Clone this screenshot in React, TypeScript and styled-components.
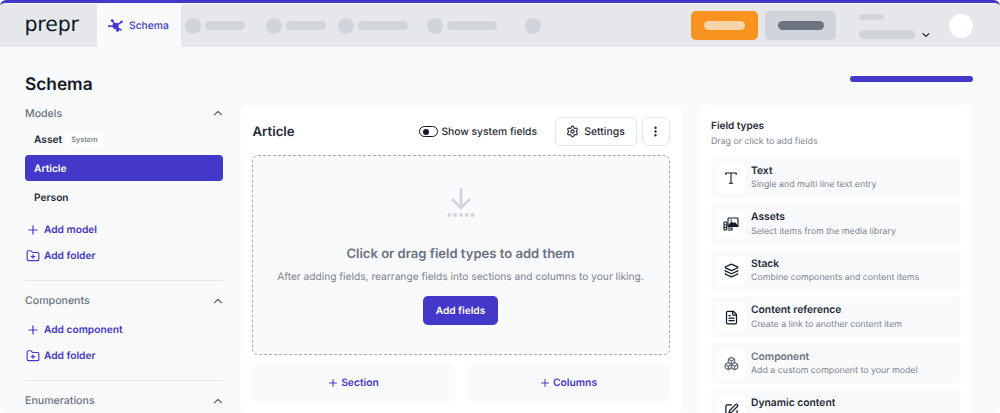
import React from "react";
import styled, { createGlobalStyle } from "styled-components";
import { Boxes, ChevronDown, ChevronUp, FileText, FolderPlus, Layers, MoreVertical, Plus, Settings, SquarePen } from "lucide-react";

const Global = createGlobalStyle`
  html, body { margin: 0; padding: 0; background: #fff; }
  body { font-family: Inter, "Liberation Sans", sans-serif; overflow: hidden; text-rendering: geometricPrecision; -webkit-font-smoothing: antialiased; }
  * { box-sizing: border-box; }
`;
const Page = styled.div`
  width: 1000px; height: 413px; overflow: hidden; background: #f9fafb;
  border-radius: 6px; border-top: 3px solid #4338ca;
`;
const Header = styled.header`
  height: 43px; margin-top: 1px; background: #e5e7eb; display: flex; align-items: stretch; padding-right: 27px;
`;
const Logo = styled.div`
  width: 97px; padding: 0 0 3px 24.5px; display: flex; align-items: center;
  font: 400 20.5px/1 "DejaVu Sans", sans-serif; letter-spacing: -.15px; color: #111827;
`;
const ActiveTab = styled.div`
  width: 84px; background: #f9fafb; color: #4338ca; font-size: 10.3px; font-weight: 500;
  display: flex; align-items: center; gap: 6px; padding-left: 11px;
`;
const Skeletons = styled.div`
  display: flex; align-items: center; flex: 1; padding-left: 4px;
`;
const SkeletonItem = styled.div<{ $gap: number }>`
  display: flex; align-items: center; gap: 4px; margin-right: ${p => p.$gap}px;
`;
const Dot = styled.span`
  width: 16px; height: 16px; border-radius: 50%; background: #d1d5db;
`;
const Bar = styled.span<{ $w: number; $h?: number }>`
  width: ${p => p.$w}px; height: ${p => p.$h ?? 9}px; border-radius: 5px; background: #d1d5db;
`;
const HeaderButton = styled.div<{ $w: number; $bg: string; $ml?: number }>`
  width: ${p => p.$w}px; height: 29px; border-radius: 5px; background: ${p => p.$bg};
  margin-left: ${p => p.$ml ?? 0}px; align-self: center;
  display: flex; align-items: center; justify-content: center;
`;
const ButtonBar = styled.span<{ $w: number; $bg: string }>`
  width: ${p => p.$w}px; height: 9px; border-radius: 5px; background: ${p => p.$bg};
`;
const Account = styled.div`
  width: 73px; margin-left: 23px; display: flex; flex-direction: column; align-self: center; gap: 9px;
`;
const AccountRow = styled.div`
  display: flex; align-items: center; gap: 5px; height: 9px; color: #111827;
`;
const Avatar = styled.span`
  width: 24px; height: 24px; border-radius: 50%; background: #fff; margin-left: 17px; align-self: center;
`;
const Content = styled.main`
  padding: 0 28px 0 25px;
`;
const TitleRow = styled.div`
  height: 58px; display: flex; align-items: center; justify-content: space-between; padding-top: 17px;
`;
const Title = styled.h1`
  margin: 0; font-size: 17.3px; line-height: 24px; font-weight: 600; color: #111827;
`;
const Progress = styled.span`
  width: 123px; height: 6px; border-radius: 3px; background: #4338ca; margin: 0 -1px 12px 0;
`;
const Columns = styled.div`
  display: grid; grid-template-columns: 198px 441px 273px; column-gap: 17.5px; align-items: start;
`;
const Sidebar = styled.aside`
  display: flex; flex-direction: column; margin-top: -1px;
`;
const SectionHead = styled.div`
  height: 18px; display: flex; align-items: center; justify-content: space-between;
  font-size: 10.6px; font-weight: 500; color: #6b7280;
  svg { color: #6b7280; margin-right: -2px; }
`;
const ModelRow = styled.div<{ $active?: boolean }>`
  height: 26px; margin-bottom: 3px; border-radius: 4px; padding: 1px 0 0 9px; display: flex; align-items: center; gap: 3px;
  font-size: 10.2px; font-weight: 600; color: ${p => (p.$active ? "#fff" : "#1f2937")};
  background: ${p => (p.$active ? "#4338ca" : "transparent")};
`;
const Models = styled.div`
  margin-top: 4px; margin-bottom: 4px;
`;
const Badge = styled.span`
  background: #fff; color: #6b7280; font-size: 7.4px; font-weight: 500; border-radius: 8px; padding: 3px 6px;
`;
const AddLink = styled.div`
  height: 26px; display: flex; align-items: center; gap: 4px; padding-left: 1px;
  font-size: 10.2px; font-weight: 600; color: #4338ca;
`;
const Divider = styled.hr`
  width: 100%; height: 1px; background: #e5e7eb; border: 0; margin: 11px 0 10.5px;
`;
const AddList = styled.div`
  margin-top: 7.5px;
`;
const Card = styled.section`
  height: 310px; background: #fff; border-radius: 8px 8px 0 0;
`;
const EditorCard = styled(Card)`
  padding: 12px 12px 0 11px;
  border-radius: 8px;
`;
const EditorHead = styled.div`
  height: 29px; display: flex; align-items: center; margin-bottom: 9px;
`;
const EditorTitle = styled.h2`
  flex: 1; margin: 0 0 0 1px; font-size: 13.2px; font-weight: 600; color: #1f2937;
`;
const Toggle = styled.span`
  width: 19px; height: 11px; border: 1px solid #111827; border-radius: 6px; display: flex; align-items: center; padding-left: 3px; margin-right: 3px;
  &::before { content: ""; width: 6px; height: 6px; border-radius: 50%; background: #111827; }
`;
const ToggleLabel = styled.span`
  font-size: 10.3px; font-weight: 500; color: #1f2937; margin-right: 17.5px;
`;
const OutlineButton = styled.div<{ $w: number; $ml?: number }>`
  width: ${p => p.$w}px; height: 29px; border: 1px solid #e5e7eb; border-radius: 6px; background: #fff;
  margin-left: ${p => p.$ml ?? 0}px;
  display: flex; align-items: center; justify-content: center; gap: 5px;
  font-size: 10.4px; font-weight: 500; color: #1f2937;
`;
const DropZone = styled.div`
  height: 200px; border: 1px dashed #a7abb3; border-radius: 6px; background: #f9fafb;
  display: flex; flex-direction: column; align-items: center; padding-top: 31px;
`;
const DropHeading = styled.h3`
  margin: 27px 0 0; font-size: 13.05px; line-height: 20px; font-weight: 600; color: #6b7280;
`;
const DropText = styled.p`
  margin: 5px 0 0; font-size: 10.2px; line-height: 16px; color: #7d838f;
`;
const PrimaryButton = styled.div`
  width: 75px; height: 29px; margin-top: 11px; border-radius: 5px; background: #4338ca; color: #fff;
  display: flex; align-items: center; justify-content: center; font-size: 10.1px; font-weight: 600;
`;
const AddRow = styled.div`
  display: grid; grid-template-columns: 1fr 1fr; gap: 12px; margin-top: 9px;
`;
const AddCell = styled.div`
  height: 37px; border-radius: 5px; background: #f9fafb; color: #4338ca;
  display: flex; align-items: center; justify-content: center; gap: 2px; font-size: 10.3px; font-weight: 600;
`;
const TypesCard = styled(Card)`
  padding: 13.5px 11px 0 12px;
`;
const TypesTitle = styled.h2`
  margin: 0; font-size: 10px; line-height: 15px; font-weight: 600; color: #1f2937;
`;
const TypesSub = styled.p`
  margin: 1.5px 0 8px; font-size: 8.8px; line-height: 14px; color: #7d838f;
`;
const TypeList = styled.div`
  display: flex; flex-direction: column; gap: 5.6px;
`;
const TypeRow = styled.div`
  height: 41px; flex: none; background: #f9fafb; border-radius: 5px; padding: 5.5px 5px; display: flex; gap: 5px;
`;
const TypeIcon = styled.span<{ $muted?: boolean }>`
  width: 30px; height: 30px; flex: none; border-radius: 4px; background: #fff; display: flex; align-items: center; justify-content: center;
  color: ${p => (p.$muted ? "#6b7280" : "#111827")};
`;
const TypeText = styled.div`
  display: flex; flex-direction: column; margin-top: 1px;
`;
const TypeName = styled.span<{ $muted?: boolean }>`
  font-size: 10.3px; line-height: 14px; font-weight: 600; color: ${p => (p.$muted ? "#6b7280" : "#1f2937")};
`;
const TypeDesc = styled.span`
  font-size: 8.8px; line-height: 14px; margin-top: .5px; color: #7d838f; white-space: nowrap;
`;

const SchemaIcon = () => (
  <svg width="15" height="13" viewBox="0 0 15 13" fill="#4338ca" stroke="#4338ca" strokeWidth="1.5">
    <path d="M.8 7.2 7.5 6.8M4.2 1.6 7.5 6.8 9.5 10.6M7.5 6.8 13.6 3M13.6 11.4 8.5 8" fill="none" />
    <circle cx="7.6" cy="6.9" r="3.1" stroke="none" />
    <circle cx="4.2" cy="1.6" r="1.4" stroke="none" />
    <circle cx="1" cy="7.2" r="1" stroke="none" />
    <circle cx="9.6" cy="11" r="1.8" stroke="none" />
    <circle cx="13.6" cy="2.8" r="1.2" stroke="none" />
  </svg>
);
const SerifT = () => (
  <svg width="16" height="16" viewBox="0 0 16 16" fill="none" stroke="currentColor" strokeWidth="1.1">
    <path d="M2.8 5V3h10.4v2M8 3v10.3M5.8 13.3h4.4" />
  </svg>
);
const AssetsIcon = () => (
  <svg width="16" height="16" viewBox="0 0 16 16" fill="none" stroke="currentColor" strokeWidth="1.1">
    <rect x="5" y="2" width="10" height="8.5" rx=".8" />
    <path d="M5.5 9.8 8.5 6l2 2 1.3-1.3 2.8 3.2z" fill="currentColor" />
    <circle cx="8" cy="4.3" r=".8" fill="currentColor" stroke="none" />
    <rect x="1" y="6" width="2.8" height="8" rx=".6" />
    <path d="M1 9h2.8M1 11.5h2.8M5 12h4v2H5" />
  </svg>
);
const DropIcon = () => (
  <svg width="32" height="30" viewBox="0 0 32 30" fill="none" stroke="#d1d5db" strokeWidth="2.6">
    <path d="M16 1v19M7 12l9 9 9-9" />
    <g fill="#d1d5db" stroke="none">
      <circle cx="4.5" cy="28" r="2" /><circle cx="10.2" cy="28" r="2" /><circle cx="16" cy="28" r="2" />
      <circle cx="21.8" cy="28" r="2" /><circle cx="27.5" cy="28" r="2" />
    </g>
  </svg>
);

const types = [
  { name: "Text", desc: "Single and multi line text entry", icon: <SerifT /> },
  { name: "Assets", desc: "Select items from the media library", icon: <AssetsIcon /> },
  { name: "Stack", desc: "Combine components and content items", icon: <Layers size={15} /> },
  { name: "Content reference", desc: "Create a link to another content item", icon: <FileText size={15} /> },
  { name: "Component", desc: "Add a custom component to your model", icon: <Boxes size={15} />, muted: true },
  { name: "Dynamic content", desc: "", icon: <SquarePen size={15} /> },
];

export default function App() {
  return (
    <Page>
      <Global />
      <Header>
        <Logo>prepr</Logo>
        <ActiveTab><SchemaIcon />Schema</ActiveTab>
        <Skeletons>
          <SkeletonItem $gap={21}><Dot /><Bar $w={40} /></SkeletonItem>
          <SkeletonItem $gap={12}><Dot /><Bar $w={40} /></SkeletonItem>
          <SkeletonItem $gap={19}><Dot /><Bar $w={50} /></SkeletonItem>
          <SkeletonItem $gap={28}><Dot /><Bar $w={50} /></SkeletonItem>
          <Dot />
        </Skeletons>
        <HeaderButton $w={67} $bg="#f7931e"><ButtonBar $w={41} $bg="#f8d5a8" /></HeaderButton>
        <HeaderButton $w={71} $bg="#d1d5db" $ml={7}><ButtonBar $w={46} $bg="#6b7280" /></HeaderButton>
        <Account>
          <AccountRow><Bar $w={25} $h={6} /></AccountRow>
          <AccountRow><Bar $w={57} /><ChevronDown size={12} strokeWidth={2.2} /></AccountRow>
        </Account>
        <Avatar />
      </Header>
      <Content>
        <TitleRow><Title>Schema</Title><Progress /></TitleRow>
        <Columns>
          <Sidebar>
            <SectionHead>Models<ChevronUp size={14} /></SectionHead>
            <Models>
              <ModelRow>Asset<Badge>System</Badge></ModelRow>
              <ModelRow $active>Article</ModelRow>
              <ModelRow>Person</ModelRow>
            </Models>
            <AddLink><Plus size={14} />Add model</AddLink>
            <AddLink><FolderPlus size={14} />Add folder</AddLink>
            <Divider />
            <SectionHead>Components<ChevronUp size={14} /></SectionHead>
            <AddList>
              <AddLink><Plus size={14} />Add component</AddLink>
              <AddLink><FolderPlus size={14} />Add folder</AddLink>
            </AddList>
            <Divider />
            <SectionHead>Enumerations<ChevronUp size={14} /></SectionHead>
          </Sidebar>
          <EditorCard>
            <EditorHead>
              <EditorTitle>Article</EditorTitle>
              <Toggle />
              <ToggleLabel>Show system fields</ToggleLabel>
              <OutlineButton $w={82}><Settings size={13} />Settings</OutlineButton>
              <OutlineButton $w={28} $ml={5}><MoreVertical size={13} strokeWidth={2.4} /></OutlineButton>
            </EditorHead>
            <DropZone>
              <DropIcon />
              <DropHeading>Click or drag field types to add them</DropHeading>
              <DropText>After adding fields, rearrange fields into sections and columns to your liking.</DropText>
              <PrimaryButton>Add fields</PrimaryButton>
            </DropZone>
            <AddRow>
              <AddCell><Plus size={12} />Section</AddCell>
              <AddCell><Plus size={12} />Columns</AddCell>
            </AddRow>
          </EditorCard>
          <TypesCard>
            <TypesTitle>Field types</TypesTitle>
            <TypesSub>Drag or click to add fields</TypesSub>
            <TypeList>
              {types.map(t => (
                <TypeRow key={t.name}>
                  <TypeIcon $muted={t.muted}>{t.icon}</TypeIcon>
                  <TypeText>
                    <TypeName $muted={t.muted}>{t.name}</TypeName>
                    {t.desc && <TypeDesc>{t.desc}</TypeDesc>}
                  </TypeText>
                </TypeRow>
              ))}
            </TypeList>
          </TypesCard>
        </Columns>
      </Content>
    </Page>
  );
}
